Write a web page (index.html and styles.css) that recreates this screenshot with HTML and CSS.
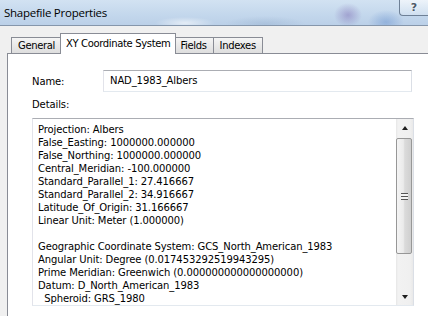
FILE: index.html
```html
<!DOCTYPE html>
<html lang="en">
<head>
    <meta charset="UTF-8">
    <meta name="viewport" content="width=device-width, initial-scale=1.0">
    <title>Shapefile Properties</title>
    <link rel="stylesheet" href="styles.css">
</head>
<body>
    <div class="titlebar">
        <span class="title">Shapefile Properties</span>
        <button class="help">?</button>
    </div>
    <div class="client">
        <div class="tabs">
            <div class="tab">General</div>
            <div class="tab active">XY Coordinate System</div>
            <div class="tab">Fields</div>
            <div class="tab">Indexes</div>
        </div>
        <div class="panel">
            <div class="name-row">
                <label class="label name-label">Name:</label>
                <div class="textbox">NAD_1983_Albers</div>
            </div>
            <div class="label details-label">Details:</div>
            <div class="details">
                <div class="details-text">Projection: Albers
False_Easting: 1000000.000000
False_Northing: 1000000.000000
Central_Meridian: -100.000000
Standard_Parallel_1: 27.416667
Standard_Parallel_2: 34.916667
Latitude_Of_Origin: 31.166667
Linear Unit: Meter (1.000000)

Geographic Coordinate System: GCS_North_American_1983
Angular Unit: Degree (0.017453292519943295)
Prime Meridian: Greenwich (0.000000000000000000)
Datum: D_North_American_1983
  Spheroid: GRS_1980</div>
                <div class="scrollbar">
                    <div class="arrow"><span class="tri up"></span></div>
                    <div class="thumb"><span class="grip"></span></div>
                    <div class="track"></div>
                    <div class="arrow"><span class="tri down"></span></div>
                </div>
            </div>
        </div>
    </div>
</body>
</html>
```

FILE: styles.css
```css
body {
    margin: 0;
    width: 428px;
    height: 316px;
    overflow: hidden;
    background-color: #f0f0f0;
    font-family: "DejaVu Sans", sans-serif;
    font-size: 10px;
    letter-spacing: -0.1px;
    color: #000;
}

.titlebar {
    height: 25px;
    border-bottom: 1px solid #8596ab;
    display: flex;
    justify-content: space-between;
    align-items: flex-start;
    background:
        radial-gradient(ellipse 14px 12px at 348px 15px, rgba(120, 100, 175, 0.45), transparent),
        radial-gradient(ellipse 18px 12px at 386px 22px, rgba(70, 120, 195, 0.35), transparent),
        radial-gradient(ellipse 30px 6px at 185px 23px, rgba(255, 255, 255, 0.6), transparent),
        radial-gradient(ellipse 40px 8px at 265px 24px, rgba(120, 150, 185, 0.25), transparent),
        linear-gradient(#d2e2f2, #c3d7ec 60%, #bbd0e8);
}

.title {
    font-family: "Open Sans", sans-serif;
    font-size: 11.5px;
    letter-spacing: -0.25px;
    line-height: 16px;
    padding: 5px 0 0 4px;
}

.help {
    width: 29px;
    height: 17px;
    margin-top: -1px;
    padding: 0;
    border: 1px solid #6e8096;
    border-right: none;
    border-radius: 0 0 0 4px;
    background: linear-gradient(rgba(255, 255, 255, 0.6), rgba(225, 235, 245, 0.4));
    font-family: "DejaVu Sans", sans-serif;
    font-size: 11px;
    font-weight: bold;
    color: #4b5868;
    text-shadow: 0 0 2px #fff;
}

.client {
    padding: 7px 0 0 7px;
}

.tabs {
    display: flex;
    align-items: flex-end;
    padding-left: 4px;
}

.tab {
    height: 15px;
    line-height: 15px;
    padding: 0 6px;
    margin-left: -1px;
    border: 1px solid #898c95;
    border-bottom: none;
    background: linear-gradient(#f5f5f5, #e9e9e9 50%, #dedede);
    letter-spacing: -0.35px;
    white-space: nowrap;
}

.tab:first-child {
    margin-left: 0;
}

.tab.active {
    position: relative;
    height: 20px;
    line-height: 19px;
    margin: 0 -2px -1px -2px;
    padding: 0 5px;
    background: #fff;
}

.panel {
    box-sizing: border-box;
    width: 421px;
    height: 263px;
    padding: 16px 0 0 24px;
    border: 1px solid #898c95;
    border-right: none;
    border-bottom: none;
    background-color: #fff;
}

.name-row {
    display: flex;
    align-items: center;
}

.name-label {
    width: 71px;
}

.textbox {
    width: 301px;
    height: 20px;
    line-height: 20px;
    padding-left: 6px;
    border: 1px solid;
    border-color: #abadb3 #dbdfe6 #e3e9ef #e2e3ea;
}

.details-label {
    display: block;
    margin-top: 6px;
    line-height: 13px;
}

.details {
    display: flex;
    width: 380px;
    height: 186px;
    margin-top: 7px;
    border: 1px solid;
    border-color: #abadb3 #dbdfe6 #e3e9ef #e2e3ea;
}

.details-text {
    flex: 1;
    padding: 4px 0 0 5px;
    line-height: 13px;
    white-space: pre;
    overflow: hidden;
}

.scrollbar {
    width: 17px;
    display: flex;
    flex-direction: column;
    background: linear-gradient(90deg, #e6e6e6, #f2f2f2 2px, #f0f0f0 14px, #e9e9e9);
}

.arrow {
    height: 17px;
    display: flex;
    justify-content: center;
    align-items: center;
}

.tri {
    width: 0;
    height: 0;
    border-left: 3.5px solid transparent;
    border-right: 3.5px solid transparent;
}

.tri.up {
    border-bottom: 4px solid #1e1e1e;
}

.tri.down {
    border-top: 4px solid #1e1e1e;
}

.thumb {
    height: 114px;
    margin: 2px 1px 0 0;
    border: 1px solid #979797;
    border-radius: 2px;
    background: linear-gradient(90deg, #f4f4f4, #ebebeb 45%, #dbdbdb 55%, #cfcfcf);
    display: flex;
    justify-content: center;
    align-items: center;
}

.grip {
    width: 7px;
    height: 7px;
    background: repeating-linear-gradient(#555 0 1px, #f4f4f4 1px 3px);
}

.track {
    flex: 1;
}
```
